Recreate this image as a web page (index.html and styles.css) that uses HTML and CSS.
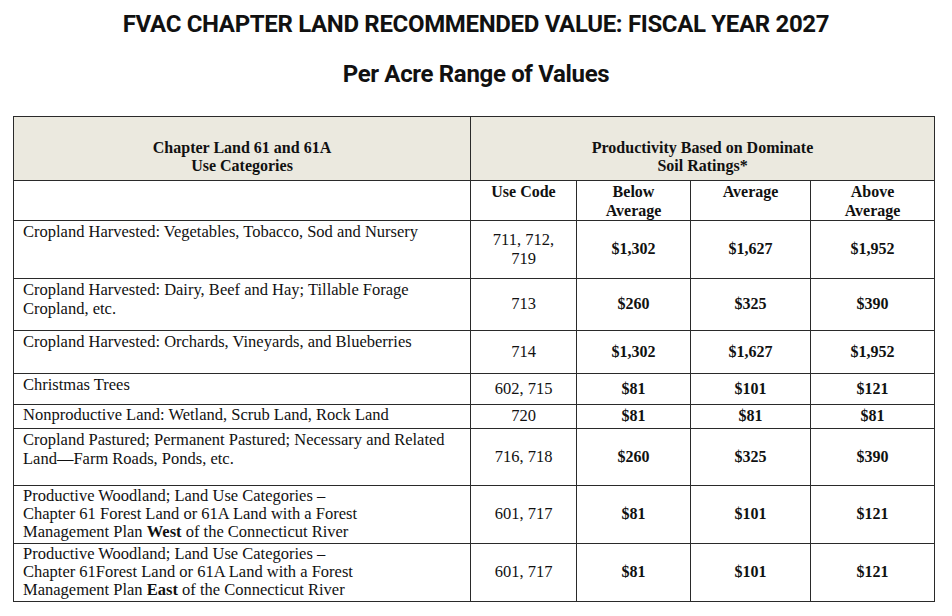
FILE: index.html
```html
<!DOCTYPE html>
<html lang="en">
<head>
  <meta charset="UTF-8" />
  <meta name="viewport" content="width=device-width, initial-scale=1.0"/>
  <title>FVAC Chapter Land Recommended Value</title>
  <link rel="stylesheet" href="styles.css">
</head>
<body>
  <div class="page">
    <h1 class="title">FVAC CHAPTER LAND RECOMMENDED VALUE: FISCAL YEAR 2027</h1>
    <h2 class="subtitle">Per Acre Range of Values</h2>

    <table class="values">
      <colgroup>
        <col class="col-cat">
        <col class="col-code">
        <col class="col-below">
        <col class="col-avg">
        <col class="col-above">
      </colgroup>
      <tr class="head">
        <th>Chapter Land 61 and 61A<br>Use Categories</th>
        <th colspan="4">Productivity Based on Dominate<br>Soil Ratings*</th>
      </tr>
      <tr class="subhead">
        <th></th>
        <th>Use Code</th>
        <th>Below<br>Average</th>
        <th>Average</th>
        <th>Above<br>Average</th>
      </tr>
      <tr class="r1">
        <td class="cat">Cropland Harvested: Vegetables, Tobacco, Sod and Nursery</td>
        <td class="code">711, 712,<br>719</td>
        <td class="val">$1,302</td>
        <td class="val">$1,627</td>
        <td class="val">$1,952</td>
      </tr>
      <tr class="r2">
        <td class="cat">Cropland Harvested: Dairy, Beef and Hay; Tillable Forage<br>Cropland, etc.</td>
        <td class="code">713</td>
        <td class="val">$260</td>
        <td class="val">$325</td>
        <td class="val">$390</td>
      </tr>
      <tr class="r3">
        <td class="cat">Cropland Harvested: Orchards, Vineyards, and Blueberries</td>
        <td class="code">714</td>
        <td class="val">$1,302</td>
        <td class="val">$1,627</td>
        <td class="val">$1,952</td>
      </tr>
      <tr class="r4">
        <td class="cat">Christmas Trees</td>
        <td class="code">602, 715</td>
        <td class="val">$81</td>
        <td class="val">$101</td>
        <td class="val">$121</td>
      </tr>
      <tr class="r5">
        <td class="cat">Nonproductive Land: Wetland, Scrub Land, Rock Land</td>
        <td class="code">720</td>
        <td class="val">$81</td>
        <td class="val">$81</td>
        <td class="val">$81</td>
      </tr>
      <tr class="r6">
        <td class="cat">Cropland Pastured; Permanent Pastured; Necessary and Related<br>Land—Farm Roads, Ponds, etc.</td>
        <td class="code">716, 718</td>
        <td class="val">$260</td>
        <td class="val">$325</td>
        <td class="val">$390</td>
      </tr>
      <tr class="r7">
        <td class="cat">Productive Woodland; Land Use Categories –<br>Chapter 61 Forest Land or 61A Land with a Forest<br>Management Plan <b>West</b> of the Connecticut River</td>
        <td class="code">601, 717</td>
        <td class="val">$81</td>
        <td class="val">$101</td>
        <td class="val">$121</td>
      </tr>
      <tr class="r8">
        <td class="cat">Productive Woodland; Land Use Categories –<br>Chapter 61Forest Land or 61A Land with a Forest<br>Management Plan <b>East</b> of the Connecticut River</td>
        <td class="code">601, 717</td>
        <td class="val">$81</td>
        <td class="val">$101</td>
        <td class="val">$121</td>
      </tr>
    </table>
  </div>
</body>
</html>
```

FILE: styles.css
```css
body {
  margin: 0;
  padding: 0;
  background-color: #ffffff;
  color: #111;
}

.page {
  width: 952px;
  height: 616px;
  overflow: hidden;
}

.title {
  margin: 0;
  padding-top: 10px;
  height: 28px;
  font-family: 'Roboto', 'Liberation Sans', sans-serif;
  font-weight: 700;
  font-size: 24px;
  line-height: 28px;
  text-align: center;
  letter-spacing: -0.33px;
}

.subtitle {
  margin: 0;
  padding-top: 22px;
  height: 28px;
  font-family: 'Roboto', 'Liberation Sans', sans-serif;
  font-weight: 700;
  font-size: 24px;
  line-height: 28px;
  text-align: center;
  letter-spacing: -0.33px;
}

.values {
  margin: 28px 0 0 13px;
  border-collapse: collapse;
  table-layout: fixed;
  width: 921px;
  font-family: 'Liberation Serif', 'Times New Roman', serif;
  font-size: 16.5px;
  line-height: 18.5px;
}

.col-cat { width: 457px; }
.col-code { width: 106px; }
.col-below { width: 114px; }
.col-avg { width: 120px; }
.col-above { width: 124px; }

.values th,
.values td {
  box-sizing: border-box;
  border: 1.5px solid #2a2a2a;
  padding: 0;
}

.head th {
  height: 64px;
  background-color: #ebe9df;
  font-size: 16px;
  font-weight: 700;
  text-align: center;
  vertical-align: middle;
  padding-top: 17px;
}

.subhead th {
  height: 38px;
  font-size: 16px;
  font-weight: 700;
  text-align: center;
  vertical-align: top;
  padding-top: 2px;
}

.values td.cat {
  text-align: left;
  vertical-align: top;
  padding: 2px 0 0 9px;
}

.values td.code {
  text-align: center;
  vertical-align: middle;
}

.values td.val {
  font-size: 16px;
  text-align: center;
  vertical-align: middle;
  font-weight: 700;
}

.r1 td { height: 58px; }
.r2 td { height: 52px; }
.r3 td { height: 43px; }
.r4 td { height: 31px; }
.r5 td { height: 24px; }
.r6 td { height: 57px; }
.r7 td { height: 58px; }
.r8 td { height: 58px; }

.r5 td.cat { padding-top: 1px; }

.r7 td.cat,
.r8 td.cat {
  padding-top: 1px;
  line-height: 18px;
}
```
